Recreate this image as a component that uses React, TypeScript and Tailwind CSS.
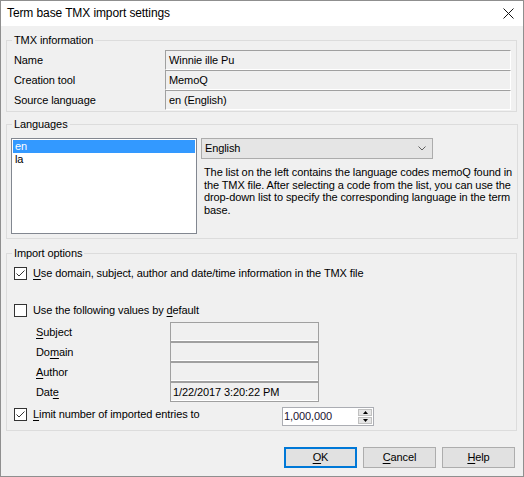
import React from "react";

const FONT = { fontFamily: '"Liberation Sans", Arial, sans-serif' };

function Ul({ children }: { children: React.ReactNode }) {
  return <span className="underline underline-offset-[2px] decoration-[1px]">{children}</span>;
}

function CheckBox({ checked }: { checked: boolean }) {
  return (
    <span className="w-[13px] h-[13px] shrink-0 border border-[#333333] bg-white flex items-center justify-center">
      {checked && (
        <svg width="11" height="11" viewBox="0 0 11 11">
          <path d="M1.5 5.5 L4 8 L9.5 2.5" fill="none" stroke="#333333" strokeWidth="1" />
        </svg>
      )}
    </span>
  );
}

function InfoRow({ label, value }: { label: string; value: string }) {
  return (
    <div className="flex items-center h-[20px]">
      <div className="w-[154px] pl-[3px] text-black">{label}</div>
      <div className="w-[346px] h-[20px] border-t border-l border-t-[#a0a0a0] border-l-[#a0a0a0] border-b border-r border-b-white border-r-white flex items-center pl-[3px] text-black">
        {value}
      </div>
    </div>
  );
}

function FieldRow({ label, value }: { label: React.ReactNode; value?: string }) {
  return (
    <div className="flex items-center h-[20px]">
      <div className="w-[159px] pl-[25px] text-black">{label}</div>
      <div className="w-[149px] h-[20px] border border-[#a0a0a0] shadow-[inset_0_-1px_0_#ffffff] flex items-center pl-[2px] text-black">
        {value}
      </div>
    </div>
  );
}

function Btn({ children, primary }: { children: React.ReactNode; primary?: boolean }) {
  return (
    <button
      className={`w-[73px] h-[21px] bg-[#e1e1e1] flex items-center justify-center text-black ${
        primary ? "border-2 border-[#0078d7]" : "border border-[#adadad]"
      }`}
    >
      {children}
    </button>
  );
}

export default function App() {
  return (
    <div
      className="w-[524px] h-[477px] border border-[#8f8f8f] bg-[#f0f0f0] flex flex-col text-[11px] leading-[13px] tracking-[-0.1px]"
      style={FONT}
    >
      {/* title bar */}
      <div className="h-[25px] bg-white flex items-center justify-between pl-[6px] pr-[9px]">
        <span className="text-[12px] text-black">Term base TMX import settings</span>
        <svg width="11" height="11" viewBox="0 0 11 11">
          <path d="M0.5 0.5 L10.5 10.5 M10.5 0.5 L0.5 10.5" stroke="#111111" strokeWidth="1" />
        </svg>
      </div>

      <div className="flex flex-col pl-[5px] pr-[6px]">
        {/* TMX information */}
        <fieldset className="mt-[8px] border border-[#dcdcdc] px-[4px] pt-[3px] pb-[1px]">
          <legend className="px-[2px] ml-[1px] leading-[13px] text-black">TMX information</legend>
          <InfoRow label="Name" value="Winnie ille Pu" />
          <InfoRow label="Creation tool" value="MemoQ" />
          <InfoRow label="Source language" value="en (English)" />
        </fieldset>

        {/* Languages */}
        <fieldset className="mt-[6px] border border-[#dcdcdc] px-[4px] pt-[7px] pb-[4px]">
          <legend className="px-[2px] ml-[1px] leading-[13px] text-black">Languages</legend>
          <div className="flex items-start">
            <div className="w-[186px] h-[96px] border border-[#828790] bg-white p-[1px] flex flex-col">
              <div className="h-[13px] bg-[#3399ff] text-white pl-[2px] flex items-center">en</div>
              <div className="h-[13px] text-black pl-[2px] flex items-center">la</div>
            </div>
            <div className="ml-[4px] w-[312px] flex flex-col">
              <div className="w-[232px] h-[21px] border border-[#acacac] bg-[#e5e5e5] flex items-center justify-between pl-[3px] pr-[6px] text-black">
                <span>English</span>
                <svg width="8" height="5" viewBox="0 0 8 5">
                  <path d="M0.5 0.5 L4 4 L7.5 0.5" fill="none" stroke="#606060" strokeWidth="1" />
                </svg>
              </div>
              <p className="mt-[7px] pl-[3px] whitespace-nowrap text-black leading-[12.7px]">
                The list on the left contains the language codes memoQ found in
                <br />
                the TMX file. After selecting a code from the list, you can use the
                <br />
                drop-down list to specify the corresponding language in the term
                <br />
                base.
              </p>
            </div>
          </div>
        </fieldset>

        {/* Import options */}
        <fieldset className="mt-[8px] border border-[#dcdcdc] px-[4px] pt-[7px] pb-[4px]">
          <legend className="px-[2px] ml-[1px] leading-[13px] text-black">Import options</legend>
          <div className="flex items-center h-[13px] pl-[3px] gap-[6px] text-black">
            <CheckBox checked />
            <span>
              <Ul>U</Ul>se domain, subject, author and date/time information in the TMX file
            </span>
          </div>
          <div className="flex items-center h-[13px] mt-[24px] pl-[3px] gap-[6px] text-black">
            <CheckBox checked={false} />
            <span>
              Use the following values by <Ul>d</Ul>efault
            </span>
          </div>
          <div className="mt-[5px] flex flex-col">
            <FieldRow label={<><Ul>S</Ul>ubject</>} />
            <FieldRow label={<>Do<Ul>m</Ul>ain</>} />
            <FieldRow label={<><Ul>A</Ul>uthor</>} />
            <FieldRow label={<>Dat<Ul>e</Ul></>} value="1/22/2017 3:20:22 PM" />
          </div>
          <div className="mt-[5px] flex items-start h-[19px] pl-[3px] text-black">
            <div className="flex items-center gap-[6px] mt-[1px] h-[13px]">
              <CheckBox checked />
              <span>
                <Ul>L</Ul>imit number of imported entries to
              </span>
            </div>
            <div className="ml-auto mr-[138px] w-[92px] h-[19px] border border-[#abadb3] bg-white flex items-stretch">
              <span className="flex-1 flex items-center pl-[1px] text-[#1a1030]">1,000,000</span>
              <div className="w-[14px] my-[1px] mr-[1px] flex flex-col gap-[1px]">
                <div className="flex-1 bg-[#e5e5e5] border border-[#c0c0c0] flex items-center justify-center">
                  <svg width="5" height="3" viewBox="0 0 5 3">
                    <path d="M2.5 0 L5 3 L0 3 Z" fill="#000000" />
                  </svg>
                </div>
                <div className="flex-1 bg-[#e5e5e5] border border-[#c0c0c0] flex items-center justify-center">
                  <svg width="5" height="3" viewBox="0 0 5 3">
                    <path d="M0 0 L5 0 L2.5 3 Z" fill="#000000" />
                  </svg>
                </div>
              </div>
            </div>
          </div>
        </fieldset>
      </div>

      {/* buttons */}
      <div className="mt-[16px] flex justify-end gap-[6px] pr-[8px]">
        <Btn primary>
          <Ul>O</Ul>K
        </Btn>
        <Btn>
          <Ul>C</Ul>ancel
        </Btn>
        <Btn>
          <Ul>H</Ul>elp
        </Btn>
      </div>
    </div>
  );
}
